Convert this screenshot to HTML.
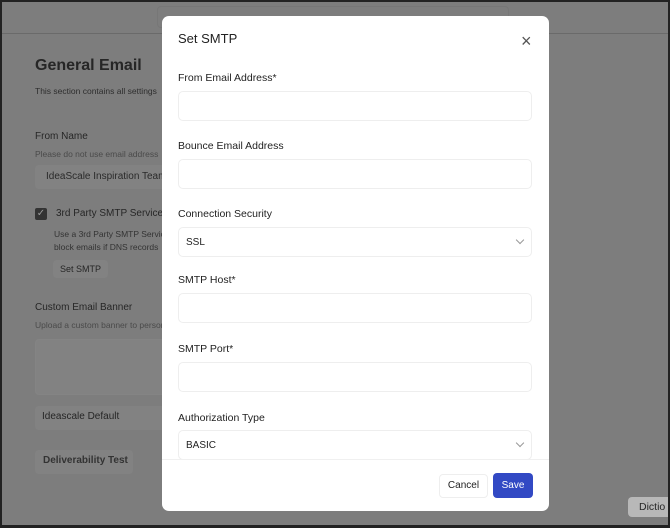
<!DOCTYPE html>
<html><head><style>
*{box-sizing:border-box;margin:0;padding:0}
body{width:670px;height:528px;overflow:hidden;font-family:"Liberation Sans",sans-serif;background:#222;position:relative}
.frame{position:absolute;left:2px;top:2px;width:666px;height:523px;background:#7d7d7d;overflow:hidden}
.t{position:absolute;color:#262626;white-space:nowrap}
.box{position:absolute;background:#828282;border-radius:4px}
.modal{position:absolute;left:162px;top:16px;width:387px;height:495px;background:#fff;border-radius:7px}
.lbl{position:absolute;left:16px;font-size:10.5px;color:#222}
.inp{position:absolute;left:16px;width:354px;height:30px;border:1px solid #eee;border-radius:5px;font-size:10px;color:#222;padding:9px 7px}
.chev{position:absolute;right:8px;top:9px;width:6px;height:6px;border-right:1px solid #999;border-bottom:1px solid #999;transform:rotate(45deg)}
</style></head><body>
<div class="frame">
 <div style="position:absolute;left:0;top:0;width:666px;height:32px;border-bottom:1px solid #6a6a6a"></div>
 <div class="box" style="left:155px;top:4px;width:352px;height:22px;border:1px solid #777;background:#7d7d7d"></div>
 <div class="t" style="left:33px;top:55px;font-size:16px;font-weight:bold">General Email</div>
 <div class="t" style="left:33px;top:84px;font-size:8.5px;color:#2e2e2e">This section contains all settings</div>
 <div class="t" style="left:33px;top:129px;font-size:10px">From Name</div>
 <div class="t" style="left:33px;top:147px;font-size:8.5px;color:#4a4a4a">Please do not use email address</div>
 <div class="box" style="left:33px;top:163px;width:140px;height:24px"></div>
 <div class="t" style="left:44px;top:169px;font-size:10px;color:#2a2a2a">IdeaScale Inspiration Team</div>
 <div style="position:absolute;left:33px;top:206px;width:12px;height:12px;background:#333;border-radius:2px;color:#999;font-size:10px;line-height:12px;text-align:center">✓</div>
 <div class="t" style="left:54px;top:206px;font-size:10px">3rd Party SMTP Service</div>
 <div class="t" style="left:52px;top:227px;font-size:8.5px;color:#333">Use a 3rd Party SMTP Service</div>
 <div class="t" style="left:52px;top:240px;font-size:8.5px;color:#333">block emails if DNS records</div>
 <div class="box" style="left:51px;top:258px;width:55px;height:18px"></div>
 <div class="t" style="left:58px;top:262px;font-size:9px">Set SMTP</div>
 <div class="t" style="left:33px;top:300px;font-size:10px">Custom Email Banner</div>
 <div class="t" style="left:33px;top:318px;font-size:8.5px;color:#4a4a4a">Upload a custom banner to person</div>
 <div class="box" style="left:33px;top:337px;width:140px;height:56px;border:1px solid #848484"></div>
 <div class="box" style="left:33px;top:404px;width:140px;height:24px"></div>
 <div class="t" style="left:40px;top:409px;font-size:10px">Ideascale Default</div>
 <div class="box" style="left:33px;top:448px;width:98px;height:24px"></div>
 <div class="t" style="left:41px;top:453px;font-size:10px;font-weight:bold;color:#333">Deliverability Test</div>
 <div class="box" style="left:626px;top:495px;width:50px;height:20px;background:#b8b8b8"></div>
 <div class="t" style="left:637px;top:499px;font-size:10.5px">Dictio</div>
</div>
<div class="modal">
  <div style="position:absolute;left:16px;top:15px;font-size:13px;color:#222">Set SMTP</div>
  <div style="position:absolute;left:359px;top:18px;font-size:18px;color:#555;line-height:14px">×</div>
  <div class="lbl" style="top:56px">From Email Address*</div>
  <div class="inp" style="top:75px"></div>
  <div class="lbl" style="top:124px">Bounce Email Address</div>
  <div class="inp" style="top:143px"></div>
  <div class="lbl" style="top:192px">Connection Security</div>
  <div class="inp" style="top:211px">SSL<span class="chev"></span></div>
  <div class="lbl" style="top:258px">SMTP Host*</div>
  <div class="inp" style="top:277px"></div>
  <div class="lbl" style="top:327px">SMTP Port*</div>
  <div class="inp" style="top:346px"></div>
  <div class="lbl" style="top:396px">Authorization Type</div>
  <div class="inp" style="top:414px">BASIC<span class="chev"></span></div>
  <div style="position:absolute;left:0;top:443px;width:387px;height:1px;background:#f0f0f0"></div>
  <div style="position:absolute;left:277px;top:458px;width:49px;height:24px;border:1px solid #eee;border-radius:4px;font-size:10px;color:#222;text-align:center;line-height:22px">Cancel</div>
  <div style="position:absolute;left:331px;top:457px;width:40px;height:25px;background:#3249c4;border-radius:4px;font-size:10px;color:#fff;text-align:center;line-height:25px">Save</div>
</div>
</body></html>
